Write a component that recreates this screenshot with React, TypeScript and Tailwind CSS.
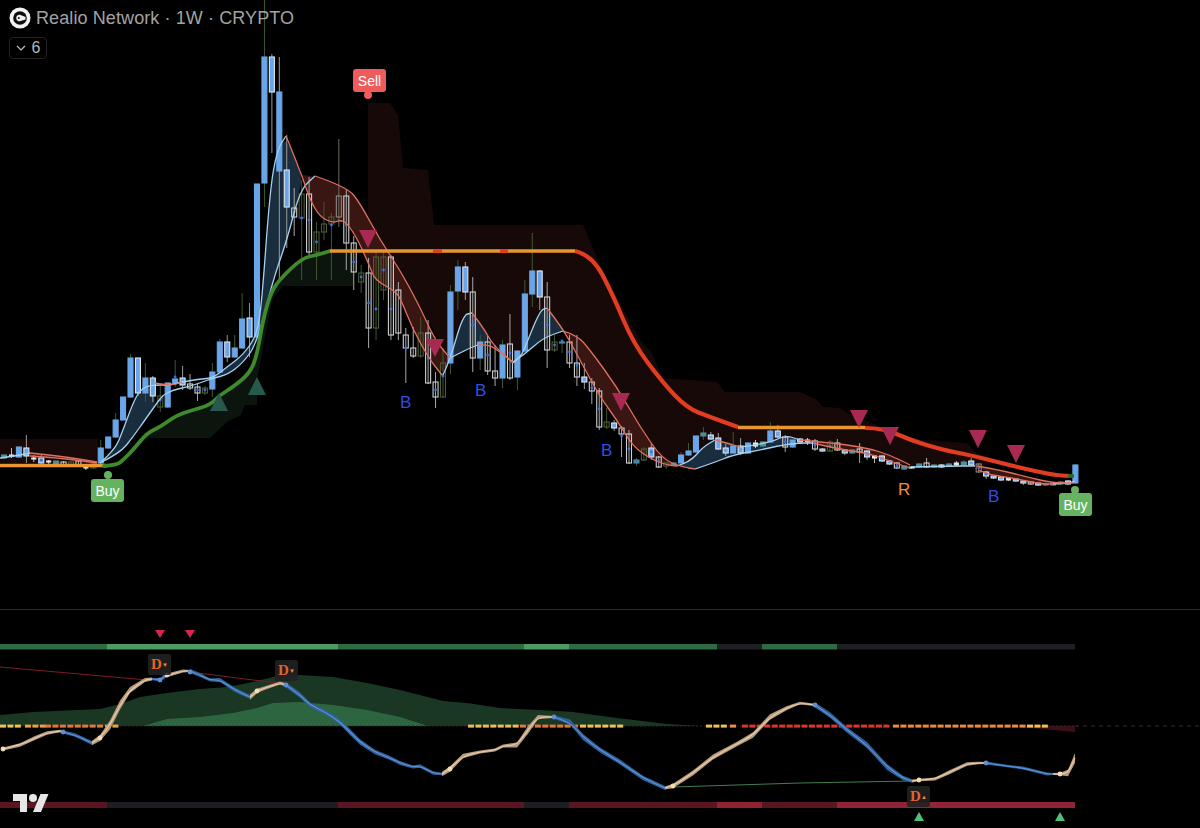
import type { ReactNode } from 'react';

type Pt = [number, number];
// wick top, body top, body bottom, wick bottom, kind, dot y
type Candle = [number, number, number, number, string, number?];

const SPACING = 7.44;
const barX = (i: number) => 257 + SPACING * (i - 35);

const candles: Candle[] = [
  [455, 455, 458, 459, 't'],
  [448, 455, 456, 458, 'c'],
  [447, 447, 457, 458, 'b'],
  [435, 448, 456, 463, 'w'],
  [455, 458, 459, 462, 'c'],
  [455, 458, 463, 464, 'w', 460],
  [460, 461, 462, 464, 'c'],
  [461, 461, 464, 465, 't'],
  [461, 462, 466, 467, 'h'],
  [461, 462, 465, 466, 'g'],
  [461, 461, 466, 467, 'h'],
  [466, 467, 468, 470, 'c'],
  [464, 464, 468, 469, 'g'],
  [440, 448, 463, 464, 'b'],
  [437, 437, 448, 449, 'b'],
  [413, 420, 437, 438, 'b'],
  [397, 397, 420, 421, 'b'],
  [354, 358, 397, 398, 'b'],
  [358, 358, 393, 396, 'w'],
  [363, 378, 393, 402, 'b'],
  [376, 378, 396, 402, 'w'],
  [386, 396, 407, 412, 'g', 400],
  [383, 383, 407, 408, 'b'],
  [360, 379, 383, 387, 'b', 377],
  [366, 378, 385, 390, 'w'],
  [374, 384, 388, 390, 'h'],
  [384, 387, 393, 401, 'h', 390],
  [386, 388, 393, 395, 'g', 390],
  [363, 372, 389, 397, 'b'],
  [339, 342, 372, 373, 'b'],
  [335, 342, 357, 362, 'w'],
  [335, 348, 357, 358, 'b'],
  [293, 319, 348, 349, 'b'],
  [303, 318, 337, 357, 'w'],
  [184, 184, 337, 338, 'b'],
  [0, 57, 183, 207, 'b'],
  [54, 57, 92, 153, 'w'],
  [57, 92, 171, 280, 'w2'],
  [135, 170, 207, 248, 'w'],
  [188, 208, 217, 236, 'h', 212],
  [180, 194, 218, 280, 'g', 218],
  [177, 194, 252, 256, 'h', 220],
  [222, 232, 252, 280, 'g', 242],
  [202, 224, 232, 240, 'g'],
  [213, 217, 224, 280, 'g', 225],
  [139, 196, 217, 227, 'g2'],
  [190, 196, 243, 270, 'h', 225],
  [236, 243, 272, 290, 'h', 262],
  [265, 273, 282, 293, 'g', 277],
  [258, 273, 328, 348, 'h', 303],
  [250, 257, 328, 340, 'g', 309],
  [252, 257, 290, 300, 'g', 270],
  [255, 257, 335, 340, 'h', 309],
  [282, 290, 333, 340, 'h'],
  [328, 335, 348, 383, 'h', 348],
  [327, 348, 356, 358, 'h'],
  [317, 333, 356, 358, 'g'],
  [320, 333, 383, 384, 'h', 358],
  [372, 382, 397, 408, 'h', 390],
  [348, 363, 397, 398, 'g', 376],
  [285, 292, 363, 374, 'b'],
  [260, 267, 291, 310, 'b'],
  [262, 267, 292, 300, 'w'],
  [277, 292, 358, 372, 'h', 325],
  [335, 342, 358, 370, 'b'],
  [336, 342, 371, 375, 'h', 355],
  [345, 371, 378, 386, 'h'],
  [340, 345, 378, 388, 'b'],
  [314, 344, 378, 380, 'h', 353],
  [350, 351, 377, 390, 'b'],
  [280, 294, 351, 352, 'b'],
  [233, 271, 294, 307, 'b'],
  [270, 271, 297, 310, 'w'],
  [282, 297, 350, 368, 'h', 325],
  [335, 342, 350, 352, 'g', 345],
  [340, 342, 343, 353, 't', 341],
  [335, 342, 363, 368, 'h', 352],
  [335, 363, 377, 386, 'h', 365],
  [363, 377, 382, 389, 'w'],
  [378, 382, 391, 404, 'h', 388],
  [388, 391, 427, 430, 'h', 409],
  [408, 422, 427, 429, 'g'],
  [420, 423, 428, 431, 'w'],
  [426, 428, 434, 457, 'h', 436],
  [430, 434, 463, 464, 'h', 449],
  [458, 460, 463, 466, 't', 461],
  [447, 449, 460, 461, 'g'],
  [444, 448, 457, 460, 'w', 452],
  [456, 457, 467, 468, 'h', 461],
  [462, 463, 466, 469, 'g'],
  [462, 463, 465, 466, 't'],
  [452, 455, 463, 464, 'b'],
  [443, 451, 455, 456, 'b'],
  [436, 436, 452, 453, 'b'],
  [427, 433, 436, 440, 't'],
  [432, 435, 439, 440, 'w'],
  [433, 438, 449, 450, 'w'],
  [444, 448, 453, 456, 'w'],
  [432, 446, 453, 454, 'b'],
  [438, 446, 453, 455, 'w'],
  [442, 443, 453, 454, 'b'],
  [440, 443, 446, 448, 'c'],
  [441, 442, 446, 447, 't'],
  [422, 431, 442, 443, 'b'],
  [425, 431, 437, 438, 'w'],
  [435, 437, 447, 452, 'h', 442],
  [440, 440, 447, 448, 'b'],
  [438, 439, 442, 443, 'w'],
  [438, 440, 442, 445, 'c'],
  [439, 441, 449, 451, 'h', 445],
  [448, 449, 451, 452, 'w'],
  [440, 442, 451, 452, 'g', 446],
  [439, 443, 450, 451, 'h'],
  [449, 450, 453, 455, 'w'],
  [449, 450, 453, 454, 't'],
  [443, 449, 452, 463, 'h'],
  [450, 451, 457, 460, 'w'],
  [455, 456, 458, 463, 'c'],
  [455, 456, 461, 462, 'w'],
  [460, 461, 464, 465, 'w'],
  [462, 463, 468, 469, 'h', 466],
  [466, 466, 469, 470, 't'],
  [466, 467, 468, 469, 'w'],
  [463, 464, 467, 468, 't'],
  [458, 463, 467, 468, 'h'],
  [464, 465, 467, 468, 't'],
  [464, 465, 467, 468, 'w'],
  [463, 464, 466, 467, 't'],
  [461, 463, 465, 466, 'c'],
  [460, 462, 465, 466, 't'],
  [458, 461, 465, 466, 'w'],
  [463, 464, 472, 473, 'g2', 468],
  [471, 472, 476, 479, 'w', 474],
  [476, 476, 478, 479, 'w'],
  [476, 477, 480, 481, 'w'],
  [477, 478, 480, 481, 'c'],
  [479, 479, 481, 482, 'w'],
  [480, 481, 483, 485, 'w'],
  [481, 482, 484, 485, 'h'],
  [483, 483, 485, 486, 'w'],
  [483, 484, 485, 486, 't'],
  [482, 483, 485, 486, 't'],
  [481, 482, 484, 485, 't'],
  [480, 481, 484, 485, 'w'],
  [464, 465, 483, 484, 'b'],
];

const blueLines: Pt[][] = [
  [[0, 458], [15, 456], [30, 453]],
  [[100, 463], [115, 450], [123, 430], [133, 403], [140, 390], [150, 385], [170, 385], [182, 382], [200, 379], [213, 378], [227, 367], [243, 355], [257, 335], [262, 300], [270, 190], [277, 150], [286, 136]],
  [[100, 463], [120, 453], [133, 437], [147, 417], [157, 403], [163, 395], [173, 390], [187, 387], [200, 383], [213, 378], [227, 375], [243, 363], [257, 343], [273, 280], [287, 240], [300, 190], [315, 176]],
  [[443, 375], [450, 360], [463, 315], [472, 313]],
  [[450, 358], [458, 354], [470, 348], [478, 345]],
  [[513, 363], [520, 357], [524, 350], [540, 310], [547, 308]],
  [[513, 362], [524, 355], [543, 338], [563, 331]],
  [[677, 466], [690, 462], [703, 447], [715, 440]],
  [[695, 469], [713, 463], [733, 455], [760, 450], [783, 445], [800, 443], [813, 443]],
  [[740, 447], [770, 443], [785, 435], [800, 440]],
  [[912, 467], [950, 466], [975, 466]],
  [[1053, 484], [1068, 483], [1075, 481]],
];

const redLines: Pt[][] = [
  [[30, 453], [60, 456], [97, 462]],
  [[30, 456], [60, 458], [97, 463]],
  [[155, 383], [170, 386], [182, 382]],
  [[286, 136], [300, 170], [310, 200], [320, 217], [333, 223], [340, 220], [347, 223], [358, 240], [370, 267], [375, 280], [393, 290], [400, 297], [413, 330], [430, 360], [442, 375]],
  [[315, 176], [347, 187], [360, 203], [380, 240], [400, 270], [420, 307], [435, 340], [450, 358]],
  [[472, 313], [483, 327], [493, 345], [513, 363]],
  [[478, 345], [488, 344], [500, 352], [513, 362]],
  [[547, 308], [562, 327], [580, 360], [600, 397], [617, 420], [633, 447], [653, 460], [667, 465], [677, 466]],
  [[563, 331], [577, 335], [590, 350], [617, 387], [640, 427], [663, 460], [683, 467], [695, 469]],
  [[715, 440], [727, 443], [740, 447]],
  [[800, 440], [833, 443], [867, 448], [890, 455], [910, 465]],
  [[813, 443], [843, 450], [867, 453], [887, 460], [910, 468]],
  [[977, 466], [1000, 470], [1027, 477], [1053, 483], [1073, 483]],
  [[978, 470], [990, 475], [1013, 478], [1040, 484], [1053, 484]],
];

const blueFills: Pt[][] = [
  [[100, 463], [115, 450], [123, 430], [133, 403], [140, 390], [150, 385], [157, 403], [147, 417], [133, 437], [120, 453]],
  [[200, 380], [213, 378], [227, 367], [243, 355], [257, 335], [262, 300], [270, 190], [277, 150], [286, 136], [302, 175], [300, 190], [287, 240], [273, 280], [257, 343], [243, 363], [227, 375]],
  [[450, 360], [463, 315], [472, 313], [483, 327], [491, 342], [478, 345], [470, 348], [458, 354]],
  [[520, 357], [524, 350], [540, 310], [547, 308], [562, 327], [567, 334], [563, 331], [543, 338], [524, 355]],
  [[680, 466], [690, 462], [703, 447], [715, 440], [727, 443], [740, 447], [770, 443], [785, 435], [800, 441], [783, 445], [760, 450], [733, 455], [713, 463], [695, 469]],
];

const redFills: Pt[][] = [
  [[30, 453], [60, 456], [97, 462], [60, 458], [30, 456]],
  [[302, 175], [315, 176], [347, 187], [360, 203], [380, 240], [400, 270], [420, 307], [435, 340], [450, 358], [442, 375], [430, 360], [413, 330], [400, 297], [393, 290], [375, 280], [370, 267], [358, 240], [347, 223], [340, 220], [333, 223], [320, 217], [310, 200]],
  [[491, 342], [500, 352], [513, 362], [513, 363], [493, 345]],
  [[567, 334], [577, 335], [590, 350], [617, 387], [640, 427], [663, 460], [683, 467], [695, 469], [677, 466], [667, 465], [653, 460], [633, 447], [617, 420], [600, 397], [580, 360]],
  [[800, 440], [833, 443], [867, 448], [890, 455], [910, 466], [887, 460], [867, 453], [843, 450], [813, 443]],
  [[977, 466], [1000, 470], [1027, 477], [1053, 483], [1040, 484], [1013, 478], [990, 475]],
];

const redCloud: Pt[] = [
  [368, 103], [390, 103], [398, 115], [403, 168], [428, 170], [434, 225], [583, 225], [600, 265], [640, 340], [651, 352], [663, 378], [717, 382], [725, 392], [800, 392], [817, 400], [823, 407], [840, 408], [850, 415], [877, 425], [900, 435], [923, 440], [967, 443], [975, 452], [1000, 462], [980, 466], [910, 466], [890, 455], [867, 448], [833, 443], [800, 441], [785, 436], [770, 443], [740, 447], [715, 441], [690, 462], [677, 467], [695, 469], [683, 467], [663, 460], [640, 427], [617, 387], [590, 350], [563, 331], [547, 308], [524, 350], [513, 362], [488, 344], [472, 313], [450, 358], [420, 307], [400, 270], [385, 262], [368, 275],
];

const greenCloud: Pt[] = [
  [118, 464], [133, 450], [147, 433], [160, 427], [177, 415], [193, 410], [210, 405], [220, 395], [233, 387], [250, 373], [257, 355], [263, 320], [270, 295], [278, 280], [302, 258], [317, 255], [330, 251], [353, 251], [353, 286], [283, 286], [272, 300], [257, 380], [257, 405], [245, 405], [241, 415], [227, 422], [210, 438], [143, 438],
];

const trendGreen: Pt[] = [[104, 466], [117, 465], [123, 460], [133, 450], [147, 433], [160, 427], [177, 415], [193, 410], [210, 405], [220, 395], [233, 387], [250, 373], [257, 355], [263, 320], [270, 295], [278, 281], [302, 258], [317, 255], [330, 251]];
const trendRed1: Pt[] = [[575, 251], [592, 255], [613, 295], [633, 343], [663, 383], [687, 408], [710, 417], [738, 427]];
const trendRed2: Pt[] = [[865, 428], [883, 428], [910, 440], [943, 450], [970, 455], [1017, 467], [1053, 475], [1070, 476]];

const downMarks: Pt[] = [[368, 230], [435, 339], [621, 393], [859, 410], [890, 427], [978, 430], [1016, 445]];
const upMarks: Pt[] = [[219, 393], [257, 377]];

const topBar: [number, number, string][] = [
  [0, 107, '#2f6a45'], [107, 338, '#4f9a63'], [338, 524, '#2f6a45'], [524, 569, '#4f9a63'], [569, 717, '#2f6a45'], [717, 762, '#1d1f22'], [762, 837, '#2f6a45'], [837, 1075, '#1d1f22'],
];
const bottomBar: [number, number, string][] = [
  [0, 107, '#5a1522'], [107, 338, '#1c1e22'], [338, 524, '#5a1522'], [524, 569, '#1c1e22'], [569, 717, '#5a1522'], [717, 762, '#8f2430'], [762, 837, '#5a1522'], [837, 1075, '#8f2338'],
];

const dashRuns: [number, number, string][] = [
  [0, 25, '#f2c14e'], [25, 45, '#f0a040'], [45, 105, '#e8763a'], [105, 119, '#f0a040'],
  [468, 520, '#eebb55'], [520, 580, '#e8763a'], [580, 625, '#f0c050'],
  [706, 730, '#f0c050'], [730, 742, '#ee9040'], [742, 893, '#e0352b'], [893, 1027, '#ee8a3a'], [1027, 1050, '#f2c14e'],
];

const tanRuns: Pt[][] = [
  [[3, 749], [20, 745], [35, 738], [47, 733], [60, 731], [63, 732]],
  [[92, 743], [100, 738], [110, 725], [120, 705], [130, 690], [145, 680], [152, 679]],
  [[165, 676], [172, 674], [183, 671], [190, 671]],
  [[250, 697], [257, 691], [265, 688], [280, 683], [286, 685]],
  [[442, 774], [450, 769], [463, 756], [480, 752], [495, 750], [503, 746], [517, 745], [528, 730], [538, 717], [554, 717]],
  [[665, 788], [673, 786], [693, 773], [713, 757], [737, 744], [753, 735], [770, 717], [787, 708], [800, 703], [815, 705]],
  [[912, 781], [919, 780], [935, 779], [950, 772], [967, 764], [978, 763], [986, 763]],
  [[1053, 774], [1060, 774], [1068, 773], [1075, 758]],
];

const blueRuns: Pt[][] = [
  [[63, 732], [75, 735], [92, 743]],
  [[152, 679], [160, 680], [165, 676]],
  [[190, 671], [200, 675], [210, 680], [220, 680], [235, 690], [250, 697]],
  [[286, 685], [300, 695], [310, 705], [325, 712], [340, 722], [350, 732], [360, 742], [375, 752], [390, 758], [400, 763], [413, 767], [420, 766], [433, 773], [442, 774]],
  [[554, 717], [570, 722], [583, 737], [600, 750], [620, 762], [643, 778], [665, 788]],
  [[815, 705], [830, 715], [847, 730], [867, 745], [887, 767], [903, 778], [912, 781]],
  [[986, 763], [1007, 766], [1023, 768], [1047, 774], [1053, 774]],
];

const tanDots: Pt[] = [[3, 749], [100, 738], [167, 675], [257, 691], [450, 769], [673, 786], [919, 780], [1060, 774]];
const blueDots: Pt[] = [[63, 732], [160, 680], [190, 672], [286, 685], [554, 717], [815, 705], [986, 763]];

// rounds the corners of a point list with quadratic curves
function smooth(pts: Pt[]) {
  let d = `M${pts[0][0]} ${pts[0][1]}`;
  for (let i = 1; i < pts.length - 1; i++) {
    const mx = (pts[i][0] + pts[i + 1][0]) / 2;
    const my = (pts[i][1] + pts[i + 1][1]) / 2;
    d += ` Q${pts[i][0]} ${pts[i][1]} ${mx} ${my}`;
  }
  const last = pts[pts.length - 1];
  return `${d} L${last[0]} ${last[1]}`;
}

const poly = (pts: Pt[]) => pts.map((p) => p.join(',')).join(' ');

// oscillator line: thicker where it is steep
function ribbon(pts: Pt[]) {
  const thick = pts.map((p, i) => {
    const q = pts[Math.min(i + 1, pts.length - 1)];
    const o = pts[Math.max(i - 1, 0)];
    const slope = Math.abs((q[1] - o[1]) / Math.max(q[0] - o[0], 1));
    return Math.min(5, 1.1 + slope * 2);
  });
  const top = pts.map((p, i): Pt => [p[0], p[1] - thick[i]]);
  const bottom = pts.map((p, i): Pt => [p[0], p[1] + thick[i]]).reverse();
  return poly([...top, ...bottom]);
}

function CandleMark({ c, i }: { c: Candle; i: number }) {
  const [high, top, bottom, low, kind, dot] = c;
  const x = barX(i);
  const w = kind === 'c' ? 4 : 5;
  const styles: Record<string, { fill: string; stroke: string; wick: string }> = {
    b: { fill: '#6aa5e8', stroke: '#6aa5e8', wick: '#3d5a30' },
    w: { fill: '#6aa5e8', stroke: '#dfe6ee', wick: '#9a9a9a' },
    w2: { fill: '#6aa5e8', stroke: '#6aa5e8', wick: '#9a9a9a' },
    h: { fill: 'none', stroke: '#cfcfcf', wick: '#a8a8a8' },
    g: { fill: 'none', stroke: '#4d5c36', wick: '#45552f' },
    g2: { fill: 'none', stroke: '#8a8a80', wick: '#6b6b60' },
    t: { fill: '#4f8f98', stroke: '#4f8f98', wick: '#3d5a30' },
    c: { fill: '#e8e8e8', stroke: '#e8e8e8', wick: '#bdbdbd' },
  };
  const s = styles[kind];
  return (
    <g>
      <line x1={x} x2={x} y1={high} y2={low} stroke={s.wick} strokeWidth={1} />
      <rect x={x - w / 2} y={top} width={w} height={bottom - top} fill={s.fill} stroke={s.stroke} strokeWidth={1.1} />
      {dot ? <circle cx={x} cy={dot} r={1.4} fill="#3f6fe8" /> : null}
    </g>
  );
}

function Label({ left, top, color, children }: { left: string; top: string; color: string; children: ReactNode }) {
  return <span className={`absolute text-[17px] leading-none ${left} ${top} ${color}`}>{children}</span>;
}

function PriceChart() {
  return (
    <svg className="block h-full w-full" viewBox="0 0 1200 609">
      <polygon points={poly(redCloud)} fill="#170908" />
      <polygon points="0,439 98,439 98,463 0,463" fill="#170908" />
      <polygon points={poly(greenCloud)} fill="#0b150e" />
      {blueFills.map((f, i) => (
        <path key={i} d={smooth(f) + 'Z'} fill="#1a2d3e" />
      ))}
      {redFills.map((f, i) => (
        <path key={i} d={smooth(f) + 'Z'} fill="#3a1613" />
      ))}
      {candles.map((c, i) => (
        <CandleMark key={i} c={c} i={i + 1} />
      ))}
      {blueLines.map((l, i) => (
        <path key={i} d={smooth(l)} fill="none" stroke="#a5d2ee" strokeWidth={1.3} />
      ))}
      {redLines.map((l, i) => (
        <path key={i} d={smooth(l)} fill="none" stroke="#e0705f" strokeWidth={1.3} />
      ))}
      <line x1={0} x2={106} y1={465.5} y2={465.5} stroke="#e8962e" strokeWidth={3.6} />
      <path d={smooth(trendGreen)} fill="none" stroke="#3f8a2c" strokeWidth={3.8} strokeLinecap="round" />
      <line x1={330} x2={575} y1={251} y2={251} stroke="#e8962e" strokeWidth={3.6} />
      <line x1={433} x2={442} y1={251} y2={251} stroke="#e23c22" strokeWidth={3.6} />
      <line x1={500} x2={508} y1={251} y2={251} stroke="#e23c22" strokeWidth={3.6} />
      <path d={smooth(trendRed1)} fill="none" stroke="#e23c22" strokeWidth={4.2} />
      <line x1={738} x2={865} y1={427.5} y2={427.5} stroke="#e8962e" strokeWidth={3.6} />
      <path d={smooth(trendRed2)} fill="none" stroke="#e23c22" strokeWidth={4.2} />
      <line x1={1068} x2={1074} y1={476} y2={476} stroke="#2f6a22" strokeWidth={3.6} />
      {downMarks.map(([x, y]) => (
        <polygon key={x} points={`${x - 9},${y} ${x + 9},${y} ${x},${y + 18}`} fill="#a82a52" />
      ))}
      {upMarks.map(([x, y]) => (
        <polygon key={x} points={`${x - 9},${y + 18} ${x + 9},${y + 18} ${x},${y}`} fill="#28594f" />
      ))}
      <circle cx={368} cy={95} r={4} fill="#ef5a5a" />
      <circle cx={108} cy={475} r={4} fill="#66b35f" />
      <circle cx={1075} cy={490} r={4} fill="#66b35f" />
    </svg>
  );
}

function Oscillator() {
  const dashes: { x: number; color: string }[] = [];
  for (const [from, to, color] of dashRuns) {
    for (let x = from; x + 5 <= to; x += 7.44) dashes.push({ x, color });
  }
  return (
    <svg className="block h-full w-full" viewBox="0 610 1200 218">
      {topBar.map(([a, b, color]) => (
        <rect key={a} x={a} y={644} width={b - a} height={5.5} fill={color} />
      ))}
      {bottomBar.map(([a, b, color]) => (
        <rect key={a} x={a} y={802} width={b - a} height={6} fill={color} />
      ))}
      <polygon points="155,630 165,630 160,638" fill="#d6264f" />
      <polygon points="185,630 195,630 190,638" fill="#d6264f" />
      <polygon points="914,821 924,821 919,812" fill="#4fc27a" />
      <polygon points="1055,821 1065,821 1060,812" fill="#4fc27a" />
      <polygon
        points="0,726 0,715 33,712 100,709 117,705 140,697 167,693 200,689 227,687 253,682 277,676 300,675 333,677 367,683 400,690 443,701 467,703 500,708 540,710 573,712 617,718 667,724 700,726"
        fill="#1a3724"
      />
      <polygon
        points="143,726 167,719 200,717 233,713 257,708 273,703 300,702 333,705 367,710 400,717 428,726"
        fill="#2d6540"
      />
      <polygon points="1007,726 1075,732 1075,726" fill="#3a0f18" />
      <line x1={0} x2={1075} y1={726} y2={726} stroke="#2a2f2a" strokeWidth={1} strokeDasharray="2 2" />
      <line x1={1075} x2={1200} y1={726} y2={726} stroke="#4a2a26" strokeWidth={1} strokeDasharray="4 4" />
      {dashes.map((d) => (
        <rect key={d.x} x={d.x} y={724.6} width={6} height={3} fill={d.color} />
      ))}
      <polyline points="0,667 147,680" fill="none" stroke="#7a1d2b" strokeWidth={1} />
      <polyline points="190,672 277,683" fill="none" stroke="#7a1d2b" strokeWidth={1} />
      <polyline points="673,787 800,783 912,781" fill="none" stroke="#3f7f4f" strokeWidth={1} />
      {tanRuns.map((r, i) => (
        <polygon key={i} points={ribbon(r)} fill="#b89a7c" />
      ))}
      {tanRuns.map((r, i) => (
        <path key={i} d={smooth(r)} fill="none" stroke="#e6cfae" strokeWidth={1.1} />
      ))}
      {blueRuns.map((r, i) => (
        <polygon key={i} points={ribbon(r)} fill="#31609a" />
      ))}
      {blueRuns.map((r, i) => (
        <path key={i} d={smooth(r)} fill="none" stroke="#5a94d6" strokeWidth={1.1} />
      ))}
      {tanDots.map(([x, y]) => (
        <circle key={x} cx={x} cy={y} r={2.4} fill="#f3dcb0" />
      ))}
      {blueDots.map(([x, y]) => (
        <circle key={x} cx={x} cy={y} r={2.4} fill="#5f8fd0" />
      ))}
      <g fill="#e6e6e6" transform="translate(13 790)">
        <path d="M14 22H7V11H0V4h14v18zM28 22h-8l7.5-18h8L28 22z" />
        <circle cx={20} cy={8} r={4} />
      </g>
    </svg>
  );
}

function DivTag({ left, top, arrow }: { left: string; top: string; arrow: string }) {
  return (
    <div className={`absolute flex h-[21px] w-[23px] items-center justify-center rounded-[2px] bg-[#212121]/90 text-[#e4632a] ${left} ${top}`}>
      <span className="font-['Liberation_Serif',serif] text-[15px] font-bold leading-none">D</span>
      <span className="text-[6px] leading-none text-[#f08a3a]">{arrow}</span>
    </div>
  );
}

function SignalTag({ left, top, bg, children }: { left: string; top: string; bg: string; children: ReactNode }) {
  return (
    <div className={`absolute flex h-[23px] w-[33px] items-center justify-center rounded-[3px] text-[14px] leading-none text-white ${left} ${top} ${bg}`}>
      {children}
    </div>
  );
}

export default function App() {
  return (
    <div className="flex h-[828px] w-[1200px] flex-col overflow-hidden bg-black font-['Liberation_Sans',sans-serif]">
      <div className="relative h-[610px] border-b border-[#2a2a2a]">
        <PriceChart />

        <div className="absolute left-[9px] top-[6px] flex flex-col items-start gap-[8px]">
          <div className="flex items-center gap-[5px]">
            <svg width="22" height="22" viewBox="0 0 22 22">
              <circle cx="11" cy="11" r="10.5" fill="#f2f2f2" />
              <circle cx="11" cy="11" r="6.8" fill="#0c0c0c" />
              <path d="M11.5 8 A3.2 3.2 0 1 0 11.5 14 L16.5 12.5 L16.5 10 Z" fill="#f2f2f2" />
              <circle cx="9.8" cy="11" r="1" fill="#0c0c0c" />
            </svg>
            <span className="pt-[1px] text-[18px] leading-[22px] tracking-[0.1px] text-[#a3a3a3]">Realio Network · 1W · CRYPTO</span>
          </div>
          <button className="flex h-[22px] w-[38px] items-center justify-center gap-[6px] rounded-[4px] border border-[#222222] text-[16px] leading-none text-[#b5b5b5]">
            <svg width="10" height="6" viewBox="0 0 10 6">
              <path d="M1 1 L5 5 L9 1" fill="none" stroke="#c0c0c0" strokeWidth="1.2" />
            </svg>
            6
          </button>
        </div>

        <SignalTag left="left-[353px]" top="top-[69px]" bg="bg-[#ef5a5a]">Sell</SignalTag>
        <SignalTag left="left-[91px]" top="top-[479px]" bg="bg-[#66b35f]">Buy</SignalTag>
        <SignalTag left="left-[1059px]" top="top-[493px]" bg="bg-[#66b35f]">Buy</SignalTag>

        <Label left="left-[400px]" top="top-[394px]" color="text-[#2f4fe0]">B</Label>
        <Label left="left-[475px]" top="top-[382px]" color="text-[#2f4fe0]">B</Label>
        <Label left="left-[601px]" top="top-[442px]" color="text-[#2f4fe0]">B</Label>
        <Label left="left-[988px]" top="top-[488px]" color="text-[#2f4fe0]">B</Label>
        <Label left="left-[898px]" top="top-[481px]" color="text-[#f0913a]">R</Label>
      </div>

      <div className="relative flex-1">
        <Oscillator />
        <DivTag left="left-[148px]" top="top-[44px]" arrow="▼" />
        <DivTag left="left-[275px]" top="top-[50px]" arrow="▼" />
        <DivTag left="left-[907px]" top="top-[176px]" arrow="▲" />
      </div>
    </div>
  );
}
